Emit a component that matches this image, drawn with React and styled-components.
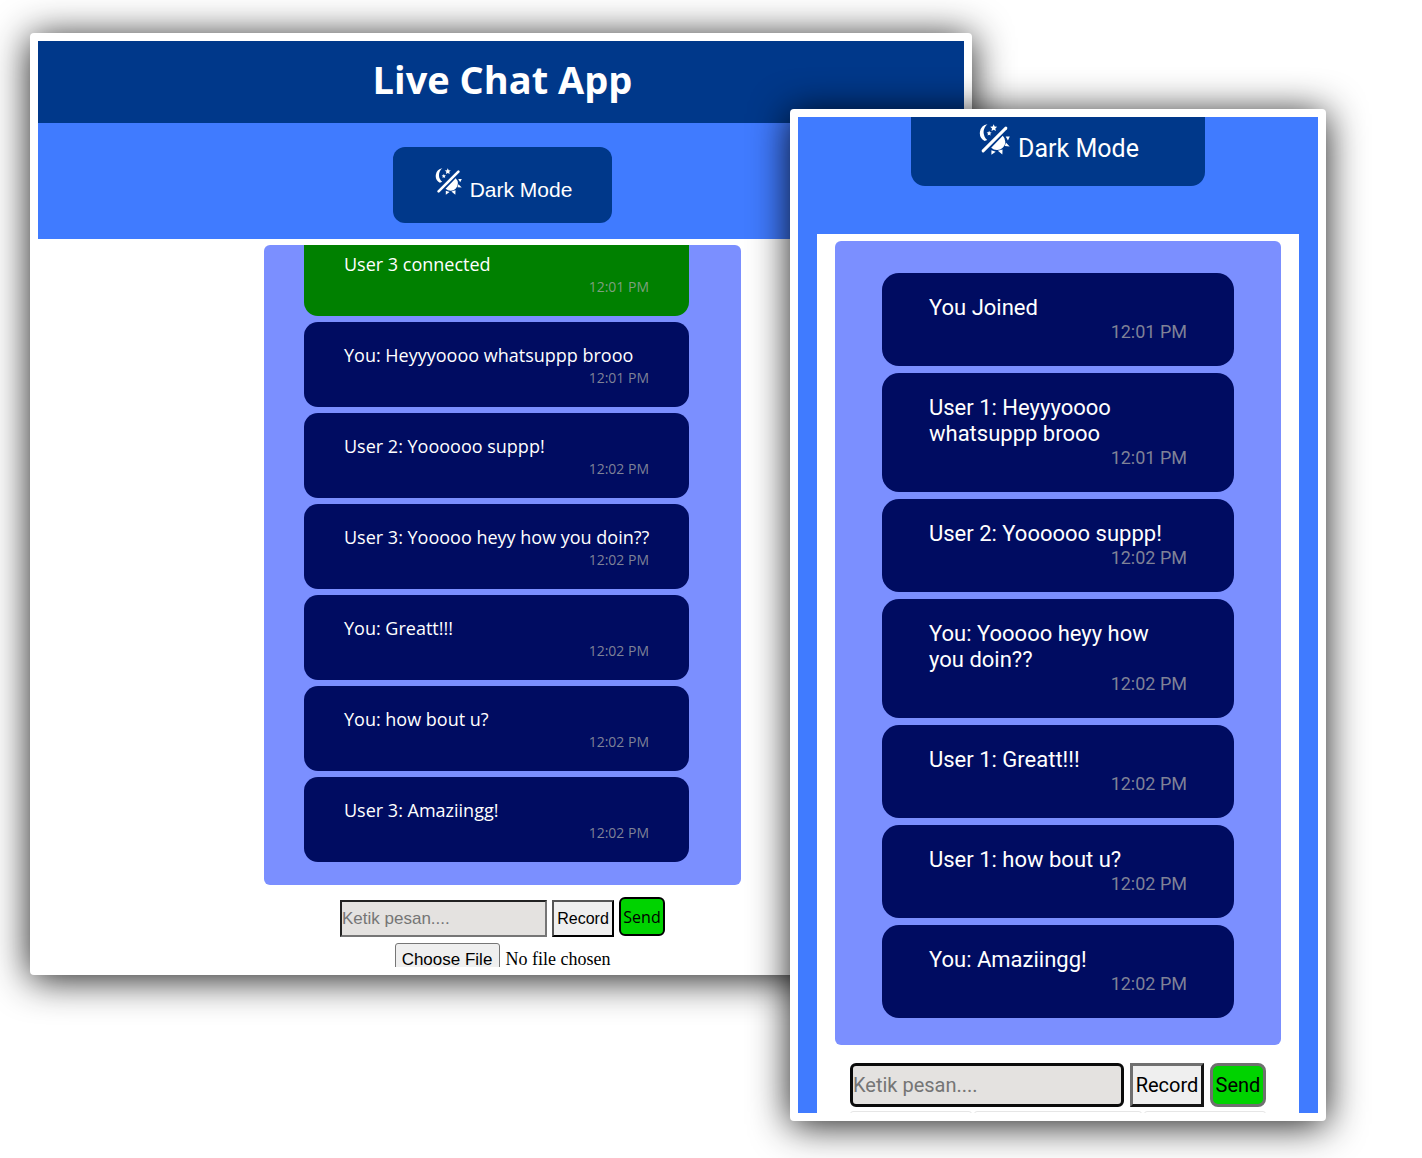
import React from "react";
import styled, { createGlobalStyle, ThemeProvider } from "styled-components";

const GlobalStyle = createGlobalStyle`
  *, *::before, *::after { box-sizing: border-box; }
  body { margin: 0; background: #fff; }
`;

const base = {
  header: "#00388a",
  accent: "#407bff",
  chat: "#7b8fff",
  bubble: "#000c61",
  joined: "#008000",
  field: "#e4e2e0",
  send: "#00d300",
};

const desktop = {
  ...base,
  font: '"Open Sans", "Noto Sans", sans-serif',
  control: '"Liberation Sans", Arial, sans-serif',
  textSize: 18,
  textWrap: "nowrap",
  timeSize: 14,
  timeLine: 19,
  bubblePad: "20px 40px",
  bubbleRadius: 14,
  gap: 6,
};

const mobile = {
  ...base,
  font: 'Roboto, sans-serif',
  control: 'Roboto, sans-serif',
  textSize: 22,
  textWrap: "normal",
  timeSize: 18,
  timeLine: 21,
  bubblePad: "22px 47px 24px",
  bubbleRadius: 17,
  gap: 7,
};

const Showcase = styled.main`
  display: grid;
  grid-template-columns: 760fr 182fr 354fr;
  align-items: start;
  padding: 33px 96px 37px 30px;
  overflow: hidden;
`;

const Frame = styled.section`
  padding: 8px;
  background: #fff;
  border-radius: 4px;
  box-shadow: 0 4px 38px rgba(0, 0, 0, 0.9);
  grid-row: 1;
  font-family: ${(p) => p.theme.font};
`;

const DesktopFrame = styled(Frame)`
  grid-column: 1 / 3;
`;

const PhoneFrame = styled(Frame)`
  grid-column: 2 / 4;
  margin-top: 76px;
  z-index: 1;
`;

const Screen = styled.div`
  display: flex;
  flex-direction: column;
  overflow: hidden;
  aspect-ratio: ${(p) => p.$ratio};
  background: ${(p) => p.$bg};
`;

const TitleBar = styled.header`
  flex: none;
  padding: 0 0 6px 3px;
  background: ${(p) => p.theme.header};
  text-align: center;
`;

const Title = styled.h1`
  margin: 0;
  color: #fff;
  font-size: 38px;
  line-height: 76px;
`;

const ModeBar = styled.div`
  flex: none;
  display: flex;
  justify-content: center;
  padding: ${(p) => p.$pad};
  background: ${(p) => p.theme.accent};
`;

const ModeButton = styled.button`
  display: flex;
  align-items: flex-start;
  gap: 8px;
  border: 0;
  color: #fff;
  background: ${(p) => p.theme.header};
  font-family: ${(p) => p.theme.control};
  cursor: pointer;
`;

const DesktopModeButton = styled(ModeButton)`
  padding: 21px 40px 21px 42px;
  border-radius: 12px;
  font-size: 21px;
  line-height: 24px;
`;

const PhoneModeButton = styled(ModeButton)`
  padding: 7px 66px 23px 68px;
  border-radius: 0 0 14px 14px;
  font-size: 25px;
  line-height: 29px;
`;

const ModeLabel = styled.span`
  padding-top: 10px;
`;

const Icon = styled.svg`
  flex: none;
  width: ${(p) => p.$size}px;
  height: ${(p) => p.$size}px;
`;

const Body = styled.div`
  flex: 1;
  display: flex;
  flex-direction: column;
  align-items: center;
  padding: ${(p) => p.$pad};
  margin: 0 ${(p) => p.$side}px;
  background: #fff;
`;

const ChatLog = styled.ol`
  flex: none;
  display: flex;
  flex-direction: column;
  justify-content: flex-end;
  gap: ${(p) => p.theme.gap}px;
  margin: 0;
  list-style: none;
  overflow: hidden;
  background: ${(p) => p.theme.chat};
  border-radius: 6px;
`;

const DesktopLog = styled(ChatLog)`
  width: 477px;
  height: 640px;
  padding: 0 52px 23px 40px;
`;

const PhoneLog = styled(ChatLog)`
  width: 446px;
  padding: 32px 47px 27px;
`;

const Bubble = styled.li`
  flex: none;
  padding: ${(p) => p.theme.bubblePad};
  border-radius: ${(p) => p.theme.bubbleRadius}px;
  background: ${(p) => (p.$joined ? p.theme.joined : p.theme.bubble)};
`;

const Message = styled.p`
  margin: 0;
  color: #fff;
  font-size: ${(p) => p.theme.textSize}px;
  line-height: 26px;
  white-space: ${(p) => p.theme.textWrap};
`;

const Time = styled.time`
  display: block;
  text-align: right;
  color: rgba(170, 170, 170, 0.75);
  font-size: ${(p) => p.theme.timeSize}px;
  line-height: ${(p) => p.theme.timeLine}px;
`;

const Composer = styled.form`
  display: flex;
  flex-direction: column;
  align-items: center;
`;

const ComposerRow = styled.div`
  display: flex;
  gap: ${(p) => p.$gap}px;
  padding-top: ${(p) => p.$top}px;
`;

const Field = styled.input`
  padding: 0;
  background: ${(p) => p.theme.field};
  font-family: ${(p) => p.theme.control};
  &::placeholder { color: #757575; opacity: 1; }
`;

const DesktopField = styled(Field)`
  width: 207px;
  height: 37px;
  margin-top: 3px;
  border: 2px solid;
  border-color: #222 #767676 #767676 #222;
  font-size: 17px;
`;

const PhoneField = styled(Field)`
  width: 274px;
  height: 44px;
  border: 3px solid #0b0b0b;
  border-radius: 6px;
  font-size: 20px;
`;

const Action = styled.button`
  padding: 0;
  color: #000;
  background: #efefef;
  font-family: ${(p) => p.theme.control};
`;

const DesktopRecord = styled(Action)`
  width: 62px;
  height: 37px;
  margin-top: 3px;
  border: 2px solid;
  border-color: #555 #000 #000 #555;
  font-size: 16px;
`;

const DesktopSend = styled(Action)`
  width: 46px;
  height: 39px;
  border: 2px solid #000;
  border-radius: 6px;
  background: ${(p) => p.theme.send};
  font-family: ${(p) => p.theme.font};
  font-size: 16px;
`;

const PhoneRecord = styled(Action)`
  width: 74px;
  height: 44px;
  border: 3px solid;
  border-color: #707070 #151515 #151515 #707070;
  font-size: 20px;
`;

const PhoneSend = styled(Action)`
  width: 56px;
  height: 44px;
  border: 3px solid #707070;
  border-radius: 8px;
  background: ${(p) => p.theme.send};
  font-size: 20px;
`;

const FilePicker = styled.input`
  width: 216px;
  margin-top: 4px;
  color: #000;
  font-family: "Liberation Serif", "Times New Roman", serif;
  font-size: 18px;
  &::file-selector-button {
    width: 105px;
    height: 34px;
    margin: 2px 6px 0 0;
    padding: 0;
    border: 1px solid #767676;
    border-radius: 3px;
    background: #efefef;
    color: #000;
    font-family: "Liberation Sans", Arial, sans-serif;
    font-size: 17px;
  }
`;

const Attachments = styled.div`
  display: grid;
  grid-template-columns: 122fr 168fr 122fr;
  gap: 2px;
  align-self: stretch;
  padding-top: 4px;
`;

const AttachmentSlot = styled.span`
  height: 24px;
  border: 1px solid #e6e6e6;
  border-radius: 3px;
`;

function ModeIcon({ size }) {
  return (
    <Icon $size={size} viewBox="0 0 30 30" fill="currentColor" aria-hidden="true">
      <path d="M8.2.3A8.6 8.6 0 0 0 5.4 16.4L8 15.4A9.6 9.6 0 0 1 8.2.3Z" />
      <path d="m14.2.2 1 2.2 2.4.3-1.8 1.6.5 2.4-2.1-1.2-2.1 1.2.5-2.4-1.8-1.6 2.4-.3Z" />
      <path d="m9.8 6.6.7 1.5 1.7.2-1.3 1.2.4 1.7-1.5-.9-1.5.9.4-1.7-1.3-1.2 1.7-.2Z" />
      <path d="M26 4 4 26" stroke="currentColor" strokeWidth="2.9" strokeLinecap="round" />
      <path d="M23 11.4A7.4 7.4 0 0 1 11.8 23Z" />
      <path d="m25.8 12.2 4-.1-1.8 3.8ZM26 18l3.7 3.8-4.7-.5ZM18.2 26l4.6-1.4-.2 5ZM12 25.4l4.2 1.4-4.2 3Z" />
    </Icon>
  );
}

function Messages({ items }) {
  return items.map(([text, time, joined]) => (
    <Bubble key={text} $joined={joined}>
      <Message>{text}</Message>
      <Time>{time}</Time>
    </Bubble>
  ));
}

const desktopMessages = [
  ["User 3 connected", "12:01 PM", true],
  ["You: Heyyyoooo whatsuppp brooo", "12:01 PM"],
  ["User 2: Yoooooo suppp!", "12:02 PM"],
  ["User 3: Yooooo heyy how you doin??", "12:02 PM"],
  ["You: Greatt!!!", "12:02 PM"],
  ["You: how bout u?", "12:02 PM"],
  ["User 3: Amaziingg!", "12:02 PM"],
];

const phoneMessages = [
  ["You Joined", "12:01 PM"],
  ["User 1: Heyyyoooo whatsuppp brooo", "12:01 PM"],
  ["User 2: Yoooooo suppp!", "12:02 PM"],
  ["You: Yooooo heyy how you doin??", "12:02 PM"],
  ["User 1: Greatt!!!", "12:02 PM"],
  ["User 1: how bout u?", "12:02 PM"],
  ["You: Amaziingg!", "12:02 PM"],
];

const stop = (e) => e.preventDefault();

export default function App() {
  return (
    <>
      <GlobalStyle />
      <Showcase>
        <ThemeProvider theme={desktop}>
          <DesktopFrame>
            <Screen $ratio="1 / 1" $bg="#fff">
              <TitleBar>
                <Title>Live Chat App</Title>
              </TitleBar>
              <ModeBar $pad="24px 0 16px 3px">
                <DesktopModeButton type="button">
                  <ModeIcon size={27} />
                  <ModeLabel>Dark Mode</ModeLabel>
                </DesktopModeButton>
              </ModeBar>
              <Body $pad="6px 0 0 3px" $side={0}>
                <DesktopLog>
                  <Messages items={desktopMessages} />
                </DesktopLog>
                <Composer onSubmit={stop}>
                  <ComposerRow $gap={5} $top={12}>
                    <DesktopField type="text" placeholder="Ketik pesan...." aria-label="Ketik pesan" />
                    <DesktopRecord type="button">Record</DesktopRecord>
                    <DesktopSend type="submit">Send</DesktopSend>
                  </ComposerRow>
                  <FilePicker type="file" aria-label="Choose File" />
                </Composer>
              </Body>
            </Screen>
          </DesktopFrame>
        </ThemeProvider>
        <ThemeProvider theme={mobile}>
          <PhoneFrame>
            <Screen $ratio="520 / 996" $bg="#407bff">
              <ModeBar $pad="0 0 48px">
                <PhoneModeButton type="button">
                  <ModeIcon size={31} />
                  <ModeLabel>Dark Mode</ModeLabel>
                </PhoneModeButton>
              </ModeBar>
              <Body $pad="7px 0 0" $side={19}>
                <PhoneLog>
                  <Messages items={phoneMessages} />
                </PhoneLog>
                <Composer onSubmit={stop}>
                  <ComposerRow $gap={6} $top={18}>
                    <PhoneField type="text" placeholder="Ketik pesan...." aria-label="Ketik pesan" />
                    <PhoneRecord type="button">Record</PhoneRecord>
                    <PhoneSend type="submit">Send</PhoneSend>
                  </ComposerRow>
                  <Attachments>
                    <AttachmentSlot />
                    <AttachmentSlot />
                    <AttachmentSlot />
                  </Attachments>
                </Composer>
              </Body>
            </Screen>
          </PhoneFrame>
        </ThemeProvider>
      </Showcase>
    </>
  );
}
